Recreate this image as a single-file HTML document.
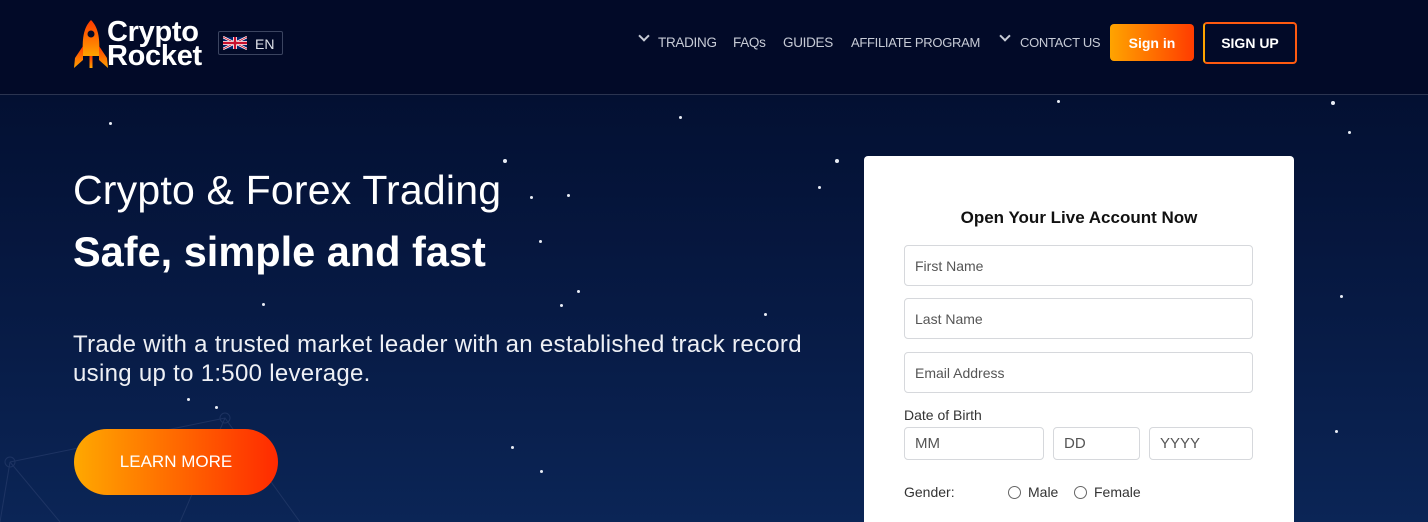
<!DOCTYPE html>
<html><head><meta charset="utf-8"><style>
*{margin:0;padding:0;box-sizing:border-box}
html,body{width:1428px;height:522px;overflow:hidden}
body{font-family:"Liberation Sans",sans-serif;background:linear-gradient(#020a28 0,#031032 95px,#06173f 250px,#0b2556 522px);position:relative;color:#fff}
.hdr{position:absolute;left:0;top:0;width:1428px;height:95px;background:#020a28;border-bottom:1px solid #2b3450}
.star{position:absolute;width:4px;height:4px;border-radius:50%;background:#e8ecf5}
.nav{position:absolute;top:35px;font-size:13.5px;color:#c7cbd6;letter-spacing:-0.3px;white-space:nowrap}
.chev{position:absolute;top:35px;width:8px;height:8px;border-right:2px solid #c7cbd6;border-bottom:2px solid #c7cbd6;transform:rotate(45deg)}
.btn{position:absolute;font-weight:bold;font-size:14px;display:flex;align-items:center;justify-content:center;border-radius:4px}
.form{position:absolute;left:864px;top:156px;width:430px;height:366px;background:#fff;border-radius:4px 4px 0 0;color:#222}
.inp{position:absolute;height:41px;border:1px solid #d6d8dc;border-radius:4px;font-size:14px;color:#555;padding-left:10px;display:flex;align-items:center}
.lbl{position:absolute;font-size:14px;color:#333}
.radio{position:absolute;width:13px;height:13px;border:1px solid #666;border-radius:50%}
</style></head><body>
<div class="hdr"></div>
<div class="star" style="left:109px;top:122px;width:3px;height:3px"></div>
<div class="star" style="left:503px;top:159px"></div>
<div class="star" style="left:679px;top:116px;width:3px;height:3px"></div>
<div class="star" style="left:835px;top:159px"></div>
<div class="star" style="left:1057px;top:100px;width:3px;height:3px"></div>
<div class="star" style="left:1331px;top:101px"></div>
<div class="star" style="left:1348px;top:131px;width:3px;height:3px"></div>
<div class="star" style="left:530px;top:196px;width:3px;height:3px"></div>
<div class="star" style="left:567px;top:194px;width:3px;height:3px"></div>
<div class="star" style="left:818px;top:186px;width:3px;height:3px"></div>
<div class="star" style="left:539px;top:240px;width:3px;height:3px"></div>
<div class="star" style="left:577px;top:290px;width:3px;height:3px"></div>
<div class="star" style="left:560px;top:304px;width:3px;height:3px"></div>
<div class="star" style="left:262px;top:303px;width:3px;height:3px"></div>
<div class="star" style="left:764px;top:313px;width:3px;height:3px"></div>
<div class="star" style="left:1340px;top:295px;width:3px;height:3px"></div>
<div class="star" style="left:187px;top:398px;width:3px;height:3px"></div>
<div class="star" style="left:215px;top:406px;width:3px;height:3px"></div>
<div class="star" style="left:511px;top:446px;width:3px;height:3px"></div>
<div class="star" style="left:540px;top:470px;width:3px;height:3px"></div>
<div class="star" style="left:1335px;top:430px;width:3px;height:3px"></div>
<svg style="position:absolute;left:0;top:400px" width="300" height="122"><g stroke="#2a3f6e" stroke-width="1" fill="none" opacity=".6"><path d="M10 62 L225 18 L300 122 M10 62 L60 122 M10 62 L0 122 M225 18 L180 122"/><circle cx="10" cy="62" r="5"/><circle cx="225" cy="18" r="5"/></g></svg>
<svg style="position:absolute;left:73px;top:18px" width="36" height="52" viewBox="0 0 36 52"><defs><linearGradient id="r" x1="0" y1="0" x2="0" y2="1"><stop offset="0" stop-color="#ff3a00"/><stop offset="1" stop-color="#ffa300"/></linearGradient></defs><path d="M18 2 C10 10 9 22 10 38 L26 38 C27 22 26 10 18 2Z" fill="url(#r)"/><circle cx="18" cy="16" r="3.5" fill="#020a28"/><path d="M10 28 L2 40 L1 50 L10 42Z M26 28 L34 40 L35 50 L26 42Z" fill="url(#r)"/><rect x="16.5" y="38" width="3" height="12" fill="url(#r)"/></svg>
<div style="position:absolute;left:107px;top:20px;font-weight:bold;font-size:29px;line-height:24px;letter-spacing:-0.3px">Crypto<br>Rocket</div>
<div style="position:absolute;left:218px;top:31px;width:65px;height:24px;border:1px solid #3b4460;border-radius:2px;font-size:14px;color:#e0e3ea"><svg style="position:absolute;left:4px;top:4px" width="24" height="14" viewBox="0 0 60 30"><rect width="60" height="30" fill="#012169"/><path d="M0 0L60 30M60 0L0 30" stroke="#fff" stroke-width="6"/><path d="M0 0L60 30M60 0L0 30" stroke="#c8102e" stroke-width="2"/><path d="M30 0V30M0 15H60" stroke="#fff" stroke-width="10"/><path d="M30 0V30M0 15H60" stroke="#c8102e" stroke-width="6"/></svg><span style="position:absolute;left:36px;top:4px">EN</span></div>
<div class="chev" style="left:640px;top:32px"></div>
<div class="nav" style="left:658px">TRADING</div>
<div class="nav" style="left:733px">FAQs</div>
<div class="nav" style="left:783px">GUIDES</div>
<div class="nav" style="left:851px;font-size:13px">AFFILIATE PROGRAM</div>
<div class="chev" style="left:1001px;top:32px"></div>
<div class="nav" style="left:1020px;font-size:13px">CONTACT US</div>
<div class="btn" style="left:1110px;top:24px;width:84px;height:37px;background:linear-gradient(90deg,#ffa400,#ff3c00)">Sign in</div>
<div class="btn" style="left:1203px;top:22px;width:94px;height:42px;border:2px solid #ff5a10;border-left-color:#ffa400;background:#020a28">SIGN UP</div>
<div style="position:absolute;left:73px;top:167px;font-size:41px;font-weight:300;letter-spacing:.2px">Crypto &amp; Forex Trading</div>
<div style="position:absolute;left:73px;top:228px;font-size:41.5px;font-weight:bold">Safe, simple and fast</div>
<div style="position:absolute;left:73px;top:330px;font-size:24px;line-height:29px;color:#eef0f5;letter-spacing:0.3px">Trade with a trusted market leader with an established track record<br>using up to 1:500 leverage.</div>
<div style="position:absolute;left:74px;top:429px;width:204px;height:66px;border-radius:33px;background:linear-gradient(90deg,#ffa800,#ff2a00);display:flex;align-items:center;justify-content:center;font-size:17px">LEARN MORE</div>
<div class="form">
<div style="position:absolute;left:0;width:430px;top:52px;text-align:center;font-weight:bold;font-size:17px;color:#111">Open Your Live Account Now</div>
<div class="inp" style="left:40px;top:89px;width:349px">First Name</div>
<div class="inp" style="left:40px;top:142px;width:349px">Last Name</div>
<div class="inp" style="left:40px;top:196px;width:349px">Email Address</div>
<div class="lbl" style="left:40px;top:251px">Date of Birth</div>
<div class="inp" style="left:40px;top:271px;width:140px;height:33px;font-size:15px">MM</div>
<div class="inp" style="left:189px;top:271px;width:87px;height:33px;font-size:15px">DD</div>
<div class="inp" style="left:285px;top:271px;width:104px;height:33px;font-size:15px">YYYY</div>
<div class="lbl" style="left:40px;top:328px">Gender:</div>
<div class="radio" style="left:144px;top:330px"></div><div class="lbl" style="left:164px;top:328px">Male</div>
<div class="radio" style="left:210px;top:330px"></div><div class="lbl" style="left:230px;top:328px">Female</div>
</div>
</body></html>
